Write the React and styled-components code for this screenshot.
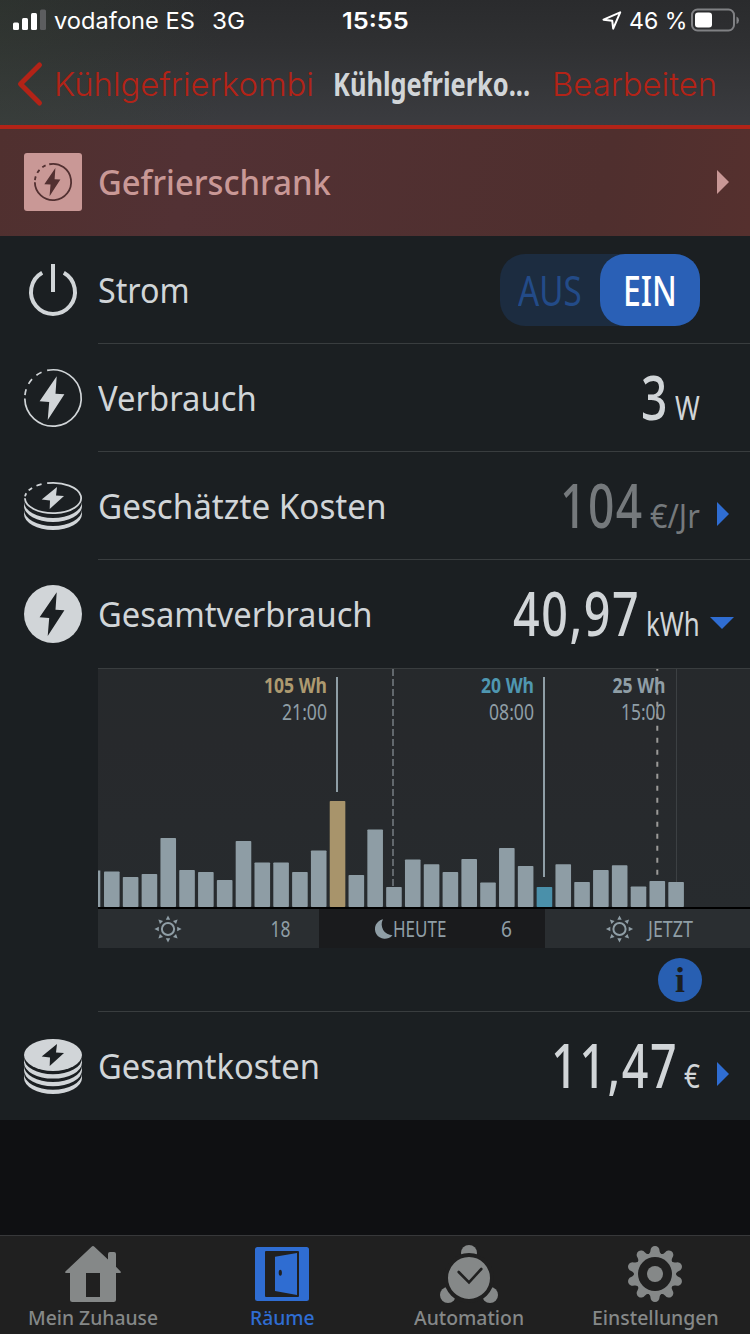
import React, { useLayoutEffect, useRef, useState } from 'react';
import styled, { createGlobalStyle } from 'styled-components';

const light = '#d1d5d8';
const blue = '#2f6dd2';
const red = '#b32317';
const pink = '#c99896';
const slate = '#8f9ea6';
const grey = '#858888';
const card = '#1b1f22';

// squeezes a line of text into a fixed width
function Fit({ w, children, ...rest }) {
  const ref = useRef(null);
  const [scale, setScale] = useState(1);
  useLayoutEffect(() => {
    setScale(w / ref.current.offsetWidth);
  }, [w, children]);
  return (
    <FitBox $w={w} {...rest}>
      <FitText ref={ref} style={{ transform: `scaleX(${scale})` }}>{children}</FitText>
    </FitBox>
  );
}

const BOLT = '32.7,7.3 31.5,24.7 40.4,25.2 23.7,51 25.2,33 15.6,32.3';
const SMALL_BOLT = '33,5 32,13.5 40,14 25.7,27 26,18.5 17.7,17.6';

function arc(cx, cy, rx, ry, from, to) {
  const pt = (deg) => {
    const a = (deg * Math.PI) / 180;
    return `${(cx - rx * Math.cos(a)).toFixed(2)} ${(cy - ry * Math.sin(a)).toFixed(2)}`;
  };
  const large = to - from > 180 ? 1 : 0;
  return `M${pt(from)}A${rx} ${ry} 0 ${large} 1 ${pt(to)}`;
}

function DashedRing({ cy, rx, ry, width }) {
  const parts = [[6, 18], [30, 42], [54, 66], [78, 359]];
  return (
    <path
      d={parts.map(([a, b]) => arc(29, cy, rx, ry, a, b)).join('')}
      fill="none"
      stroke="currentColor"
      strokeWidth={width}
    />
  );
}

const band = (top, h) => `M0 ${top}A29 16 0 0 0 58 ${top}V${top + h}A29 16 0 0 1 0 ${top + h}Z`;

const PowerIcon = () => (
  <Icon width="58" height="58" viewBox="0 0 58 58">
    <path d="M18.2 11.8A22 22 0 1 0 39.8 11.8M29 3V31" fill="none" stroke="currentColor" strokeWidth="4" />
  </Icon>
);

const UsageIcon = () => (
  <Icon width="58" height="58" viewBox="0 0 58 58">
    <DashedRing cy={29} rx={28.2} ry={28.2} width={1.7} />
    <polygon points={BOLT} fill="currentColor" />
  </Icon>
);

const CostIcon = () => (
  <Icon width="58" height="48" viewBox="0 0 58 48">
    <DashedRing cy={16} rx={28.1} ry={15.1} width={1.8} />
    <polygon points={SMALL_BOLT} fill="currentColor" />
    <path d={`${band(20, 4)}${band(28, 4)}`} fill="currentColor" />
  </Icon>
);

const TotalIcon = () => (
  <Icon width="58" height="58" viewBox="0 0 58 58">
    <circle cx="29" cy="29" r="29" fill="currentColor" />
    <polygon points={BOLT} fill={card} />
  </Icon>
);

const CoinsIcon = () => (
  <Icon width="58" height="55" viewBox="0 0 58 55">
    <ellipse cx="29" cy="16" rx="29" ry="16" fill="currentColor" />
    <polygon points={SMALL_BOLT} fill={card} />
    <path d={`${band(19.3, 4.3)}${band(27, 4.3)}${band(34.7, 4.3)}`} fill="currentColor" />
  </Icon>
);

const GroupIcon = () => (
  <Icon width="58" height="58" viewBox="0 0 58 58">
    <rect width="58" height="58" rx="3" fill="currentColor" />
    <g color="#523031" transform="translate(10.2 10.2) scale(.648)">
      <DashedRing cy={29} rx={28} ry={28} width={2.8} />
      <polygon points={BOLT} fill="currentColor" />
    </g>
  </Icon>
);

const HouseIcon = () => (
  <svg width="56" height="56" viewBox="0 0 56 56">
    <path
      fillRule="evenodd"
      fill="currentColor"
      d="M26.6 .8Q28 -.6 29.4 .8L43 13.4V8Q43 6 45 6H49Q51 6 51 8V20.8L55.6 25.4Q56.4 27 55 27H51V53.5Q51 56 48.5 56H7.5Q5 56 5 53.5V27H1Q-.4 27 .4 25.4ZM21 27V51H35V27Z"
    />
  </svg>
);

const DoorIcon = () => (
  <svg width="54" height="56" viewBox="0 0 54 56">
    <rect y="1" width="54" height="54" rx="2.5" fill="currentColor" />
    <rect x="10" y="5" width="34" height="46" rx="1" fill="#202020" />
    <polygon points="20,10.7 42,7 42,49 20,45" fill="currentColor" />
    <ellipse cx="25.3" cy="26.7" rx="1.6" ry="3" fill="#202020" />
  </svg>
);

const ClockIcon = () => (
  <svg width="58" height="58" viewBox="0 0 58 58">
    <g fill="currentColor">
      <circle cx="29" cy="8" r="8" />
      <circle cx="8" cy="50" r="8" />
      <circle cx="50" cy="50" r="8" />
      <circle cx="29" cy="33" r="23" stroke="#202020" strokeWidth="4" />
    </g>
    <polyline points="18.7,27 29,37.3 41.3,24" fill="none" stroke="#202020" strokeWidth="2.6" strokeLinecap="round" />
  </svg>
);

const GearIcon = () => (
  <svg width="56" height="56" viewBox="0 0 56 56">
    <g fill="currentColor">
      {[...Array(10)].map((_, i) => (
        <path key={i} d="M20 9Q23.3 7.6 23.5 4.4A4.5 4.5 0 0 1 32.5 4.4Q32.7 7.6 36 9L28 14Z" transform={`rotate(${i * 36} 28 28)`} />
      ))}
      <circle cx="28" cy="28" r="21" />
    </g>
    <circle cx="28" cy="28" r="17" fill="#202020" />
    <circle cx="28" cy="28" r="8" fill="currentColor" />
  </svg>
);

const Sun = ({ x }) => (
  <g transform={`translate(${x} 261)`}>
    <circle r="6.1" fill="none" stroke={slate} strokeWidth="2" />
    {[...Array(8)].map((_, i) => (
      <polygon key={i} points="-2.2,-9.2 2.2,-9.2 0,-13.6" fill={slate} transform={`rotate(${i * 45})`} />
    ))}
  </g>
);

const bars = [
  36.5, 35.5, 30, 33, 69, 37, 35, 27, 66, 44.5, 44.5, 35, 56.5, 106, 32, 77.5, 20, 47.5, 42.7, 35, 48,
  24.5, 59, 41, 20, 42.7, 25, 37, 41.7, 20.5, 26, 25,
];
const barColors = { 13: '#a8946b', 24: '#4a90aa' };

const labels = [
  { x: 166, y: 24.5, w: 63, text: '105 Wh', fill: '#ad9a70', bold: true },
  { x: 184, y: 52, w: 45, text: '21:00' },
  { x: 383, y: 24.5, w: 53, text: '20 Wh', fill: '#4f97b1', bold: true },
  { x: 391, y: 52, w: 45, text: '08:00' },
  { x: 514.5, y: 24.5, w: 53, text: '25 Wh', bold: true },
  { x: 523, y: 52, w: 44.5, text: '15:00' },
  { x: 172.5, y: 269, w: 20, text: '18' },
  { x: 295, y: 269, w: 53.5, text: 'HEUTE' },
  { x: 403, y: 269, w: 11, text: '6' },
  { x: 550, y: 269, w: 45, text: 'JETZT' },
];

const Chart = () => (
  <ChartSvg width="652" height="280" viewBox="0 0 652 280">
    <defs>
      <linearGradient id="plot" x1="0" y1="0" x2="0" y2="1">
        <stop offset="0" stopColor="#26292c" />
        <stop offset=".3" stopColor="#27292c" />
        <stop offset="1" stopColor="#272b2e" />
      </linearGradient>
    </defs>
    <rect width="652" height="239" fill="url(#plot)" />
    <rect width="652" height="1" fill="#393d3f" />
    <rect x="578" y="1" width="1" height="213" fill="#3c4043" />
    <path d="M295 1V219" stroke="#62686d" strokeWidth="2" strokeDasharray="7 3" />
    {bars.map((h, i) => (
      <rect key={i} x={Math.max(0, -12.8 + i * 18.81)} y={239 - h} width={i ? 15.6 : 2.3} height={h} rx={i ? 0.8 : 0} fill={barColors[i] || '#8e9da5'} />
    ))}
    <rect x="238" y="9" width="2" height="115" fill={slate} />
    <rect x="445" y="9" width="2" height="200" fill={slate} />
    <rect y="241" width="652" height="39" fill="#2a2e31" />
    <rect x="221" y="241" width="226" height="39" fill="#1a1b1d" />
    <rect y="239" width="652" height="2" fill="#000" />
    <Sun x={70} />
    <Sun x={521.5} />
    <path d="M285 251.2A9.9 9.9 0 1 0 294.5 267.2A10.8 10.8 0 0 1 285 251.2Z" fill={slate} />
    {labels.map((l) => (
      <ChartText key={l.text} x={l.x} y={l.y} textLength={l.w} lengthAdjust="spacingAndGlyphs" fill={l.fill || slate} $bold={l.bold}>
        {l.text}
      </ChartText>
    ))}
    <path d="M559.3 1V213" stroke="#9b9a98" strokeWidth="2" strokeDasharray="5 7" strokeDashoffset="3.3" />
  </ChartSvg>
);

function Row({ icon, label, w, children }) {
  return (
    <RowBox>
      <IconCell>{icon}</IconCell>
      <RowBody>
        <Label w={w}>{label}</Label>
        {children}
      </RowBody>
    </RowBox>
  );
}

function Reading({ value, vw, unit, uw, dim, arrow }) {
  return (
    <>
      <Value $dim={dim}>
        <Digits w={vw}>{value}</Digits>
        <Unit w={uw}>{unit}</Unit>
      </Value>
      <ArrowCell>
        {arrow === 'right' && <ArrowRight $color={blue} />}
        {arrow === 'down' && <ArrowDown />}
      </ArrowCell>
    </>
  );
}

const App = () => (
  <Screen>
    <GlobalStyle />
    <Header>
      <StatusBar>
        <StatusSide>
          <svg width="34" height="22" viewBox="0 0 34 22">
            <rect x="0" y="12.5" width="6" height="7.5" rx="1.5" fill="#fff" />
            <rect x="9" y="8" width="6" height="12" rx="1.5" fill="#fff" />
            <rect x="18" y="3" width="6" height="17" rx="1.5" fill="#fff" />
            <rect x="27" y="-.5" width="6" height="20.5" rx="1.5" fill="#5c5d5f" />
          </svg>
          <StatusText w={141}>vodafone ES</StatusText>
          <Network w={33}>3G</Network>
        </StatusSide>
        <Clock w={67}>15:55</Clock>
        <StatusSide $end>
          <svg width="20" height="20" viewBox="0 0 20 20">
            <path d="M1.5 8.7L18.2 1.3L11.2 17.7L10.2 9.7Z" fill="none" stroke="#fff" strokeWidth="2" strokeLinejoin="round" />
          </svg>
          <Percent w={58}>46 %</Percent>
          <svg width="48" height="24" viewBox="0 0 48 24">
            <rect x="1" y=".5" width="42" height="21" rx="5.5" fill="none" stroke="#808184" strokeWidth="2" />
            <rect x="4" y="3.5" width="17" height="15" rx="3" fill="#fff" />
            <path d="M45.5 7.5Q48 8.5 48 11.2T45.5 15Z" fill="#808184" />
          </svg>
        </StatusSide>
      </StatusBar>
      <NavBar>
        <svg width="26" height="44" viewBox="0 0 26 44">
          <path d="M22.5 3L3.5 22L22.5 41" fill="none" stroke={red} strokeWidth="5" strokeLinecap="round" strokeLinejoin="round" />
        </svg>
        <NavLink w={260}>Kühlgefrierkombi</NavLink>
        <Title w={197}>Kühlgefrierko...</Title>
        <Edit w={165}>Bearbeiten</Edit>
      </NavBar>
    </Header>
    <GroupRow>
      <IconCell><GroupIcon /></IconCell>
      <GroupLabel w={233}>Gefrierschrank</GroupLabel>
      <GroupArrow><ArrowRight $color={pink} /></GroupArrow>
    </GroupRow>
    <Card>
      <Row icon={<PowerIcon />} label="Strom" w={92}>
        <Toggle>
          <ToggleOption><Fit w={64}>AUS</Fit></ToggleOption>
          <ToggleOption $on><Fit w={54}>EIN</Fit></ToggleOption>
        </Toggle>
      </Row>
      <Row icon={<UsageIcon />} label="Verbrauch" w={159}>
        <Reading value="3" vw={28} unit="W" uw={25} />
      </Row>
      <Row icon={<CostIcon />} label="Geschätzte Kosten" w={289}>
        <Reading value="104" vw={84} unit="€/Jr" uw={50} dim arrow="right" />
      </Row>
      <Row icon={<TotalIcon />} label="Gesamtverbrauch" w={275}>
        <Reading value="40,97" vw={127} unit="kWh" uw={54} arrow="down" />
      </Row>
      <ChartSection>
        <Chart />
        <InfoButton>i</InfoButton>
      </ChartSection>
      <Row icon={<CoinsIcon />} label="Gesamtkosten" w={222}>
        <Reading value="11,47" vw={127} unit="€" uw={16} arrow="right" />
      </Row>
    </Card>
    <TabBar>
      <Tab><HouseIcon /><TabLabel w={130}>Mein Zuhause</TabLabel></Tab>
      <Tab $active><DoorIcon /><TabLabel w={65}>Räume</TabLabel></Tab>
      <Tab><ClockIcon /><TabLabel w={110}>Automation</TabLabel></Tab>
      <Tab><GearIcon /><TabLabel w={127}>Einstellungen</TabLabel></Tab>
    </TabBar>
  </Screen>
);

export default App;

const GlobalStyle = createGlobalStyle`
  body {
    margin: 0;
    background: #0f1012;
  }
  svg {
    display: block;
    flex: none;
    overflow: visible;
  }
`;

const FitBox = styled.span`
  display: block;
  flex: none;
  width: ${(p) => p.$w}px;
  white-space: nowrap;
`;

const FitText = styled.span`
  display: inline-block;
  transform-origin: 0 50%;
`;

const Screen = styled.div`
  display: flex;
  flex-direction: column;
  width: 750px;
  height: 1334px;
  overflow: hidden;
  background: #0f1012;
  color: ${light};
  font-family: 'Noto Sans', sans-serif;
`;

const Header = styled.header`
  height: 125px;
  flex: none;
  border-bottom: 4px solid ${red};
  background:
    linear-gradient(90deg, rgba(52, 64, 50, 0.35), transparent 30%),
    linear-gradient(#2a2b2d, #2f3032 35%, #3b3c40);
`;

const StatusBar = styled.div`
  display: grid;
  grid-template-columns: 1fr auto 1fr;
  align-items: center;
  height: 41px;
  color: #fff;
  font-family: Inter, sans-serif;
  font-size: 23.5px;
  line-height: 41px;
`;

const StatusSide = styled.div`
  display: flex;
  align-items: center;
  justify-content: ${(p) => (p.$end ? 'flex-end' : 'flex-start')};
  padding: 0 11px 0 13px;
`;

const StatusText = styled(Fit)`
  margin-left: 7px;
`;

const Network = styled(Fit)`
  margin-left: 17px;
`;

const Percent = styled(Fit)`
  margin: 0 4px 0 7px;
`;

const Clock = styled(Fit)`
  font-weight: 600;
`;

const NavBar = styled.nav`
  display: flex;
  align-items: center;
  height: 86px;
  padding-left: 17px;
  line-height: 88px;
`;

const NavLink = styled(Fit)`
  margin-left: 11px;
  color: ${red};
  font-family: Inter, sans-serif;
  font-size: 33px;
  font-weight: 300;
`;

const Title = styled(Fit)`
  margin-left: 19px;
  font-size: 32px;
  font-weight: 700;
`;

const Edit = styled(NavLink)`
  margin-left: 22px;
`;

const GroupRow = styled.div`
  display: flex;
  align-items: center;
  height: 106px;
  flex: none;
  padding-bottom: 1px;
  color: ${pink};
  background: linear-gradient(100deg, #50302f, #523134 25%, #4f2f2e 80%, #55302e);
`;

const IconCell = styled.div`
  display: flex;
  justify-content: center;
  width: 58px;
  margin: 0 16px 0 24px;
`;

const Icon = styled.svg`
  overflow: visible;
`;

const Label = styled(Fit)`
  font-size: 34px;
  line-height: 46px;
`;

const GroupLabel = styled(Label)`
  font-weight: 500;
`;

const GroupArrow = styled.div`
  margin: 0 21px 0 auto;
`;

const Card = styled.section`
  flex: none;
  background: ${card};
`;

const RowBox = styled.div`
  display: flex;
  align-items: center;
  height: 108px;
`;

const RowBody = styled.div`
  display: flex;
  align-items: center;
  flex: 1;
  height: 107px;
  border-bottom: 1px solid #393d3f;

  ${RowBox}:nth-child(4) &,
  ${RowBox}:last-child & {
    border-color: transparent;
  }
`;

const Toggle = styled.div`
  display: flex;
  width: 200px;
  height: 72px;
  margin: 0 50px 0 auto;
  border-radius: 25px;
  background: #1c2c40;
`;

const ToggleOption = styled.div`
  display: flex;
  align-items: center;
  justify-content: center;
  width: 100px;
  border-radius: 25px;
  font-size: 42px;
  font-weight: ${(p) => (p.$on ? 500 : 400)};
  line-height: 70px;
  color: ${(p) => (p.$on ? '#fff' : '#234b88')};
  background: ${(p) => (p.$on ? '#2a60b6' : 'transparent')};
`;

const Value = styled.div`
  display: flex;
  align-items: baseline;
  margin-left: auto;
  color: ${(p) => (p.$dim ? '#75797c' : light)};
`;

const Digits = styled(Fit)`
  font-size: 61px;
  font-weight: 500;
  letter-spacing: 2px;
  line-height: 60px;
`;

const Unit = styled(Fit)`
  margin-left: 6px;
  font-size: 33px;
  line-height: 40px;
`;

const ArrowCell = styled.div`
  display: flex;
  justify-content: center;
  width: 44px;
  padding: 16px 5px 0 1px;
`;

const ArrowRight = styled.div`
  border: 12px solid transparent;
  border-left-color: ${(p) => p.$color};
  border-right: 0;
`;

const ArrowDown = styled.div`
  margin: 2px 2px 0 0;
  border: 12px solid transparent;
  border-top-color: ${blue};
  border-bottom: 0;
`;

const ChartSection = styled.div`
  display: flex;
  flex-direction: column;
  align-items: flex-end;
  height: 343px;
  margin-left: 98px;
  border-bottom: 1px solid #393d3f;
`;

const ChartSvg = styled.svg`
  font-family: 'Noto Sans', sans-serif;
`;

const ChartText = styled.text`
  font-size: 21.5px;
  font-weight: ${(p) => (p.$bold ? 700 : 400)};
`;

const InfoButton = styled.div`
  width: 44px;
  height: 44px;
  margin: 10px 48px 0 0;
  border-radius: 50%;
  background: #285fb2;
  color: ${card};
  font: bold 36px/44px 'Liberation Serif', serif;
  text-align: center;
`;

const TabBar = styled.footer`
  display: grid;
  grid-template-columns: 186px 192px 182px 190px;
  height: 98px;
  margin-top: auto;
  border-top: 1px solid #37383a;
  background: #202020;
`;

const Tab = styled.div`
  display: grid;
  grid-template-rows: 76px 22px;
  align-items: center;
  justify-items: center;
  color: ${(p) => (p.$active ? blue : grey)};
`;

const TabLabel = styled(Fit)`
  margin-top: -10px;
  font-size: 19px;
  font-weight: 500;
  line-height: 26px;
`;
